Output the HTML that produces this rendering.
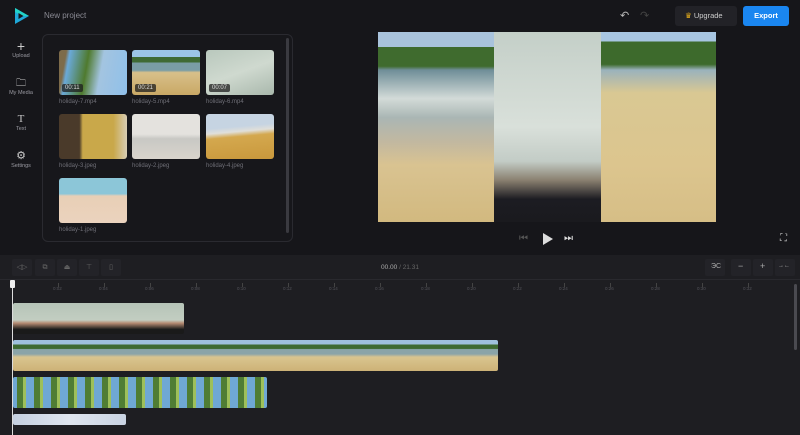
<!DOCTYPE html>
<html><head><meta charset="utf-8"><style>
*{margin:0;padding:0;box-sizing:border-box}
body{width:800px;height:435px;overflow:hidden;background:#16161a;font-family:"Liberation Sans",sans-serif;color:#8a8a93;position:relative}
.a{position:absolute}
.lbl{font-size:6px;color:#6e6e76;position:absolute}
.side{position:absolute;left:4px;width:34px;text-align:center;font-size:5.5px;color:#9a9aa2}
.th{position:absolute;width:68px;height:45px;border-radius:3px;overflow:hidden}
.dur{position:absolute;left:3px;bottom:3px;background:rgba(30,30,30,.75);color:#ddd;font-size:6px;padding:1px 3px;border-radius:2px}
.tb{position:absolute;top:259px;width:20px;height:17px;background:#232328;border-radius:2px;color:#666;font-size:7px;text-align:center;line-height:17px}
.tick{position:absolute;top:283px;width:1px;height:4px;background:#444}
.tl{position:absolute;top:286px;font-size:4.5px;color:#55555c}
</style></head><body>
<svg class="a" style="left:13px;top:7px" width="17" height="18" viewBox="0 0 17 18"><path d="M2 1 L16 9 L2 17 Z" fill="#1fa8d8"/><path d="M2 1 L16 9 L9 9 L2 5Z" fill="#22d3c8"/><path d="M5.5 6 L10.5 9 L5.5 12 Z" fill="#16161a"/></svg>
<div class="a" style="left:44px;top:11px;font-size:8px;color:#8a8a93">New project</div>
<div class="a" style="left:620px;top:9px;font-size:11px;color:#bbb">↶</div>
<div class="a" style="left:640px;top:9px;font-size:11px;color:#444">↷</div>
<div class="a" style="left:675px;top:6px;width:62px;height:20px;background:#222227;border-radius:3px;font-size:7.5px;color:#ccc;line-height:20px;padding-left:10px"><span style="color:#f2b61b">♛</span> Upgrade</div>
<div class="a" style="left:743px;top:6px;width:46px;height:20px;background:#1a86f0;border-radius:3px;font-size:7.5px;color:#fff;line-height:20px;text-align:center;font-weight:bold">Export</div>
<div class="side" style="top:40px"><div style="font-size:14px;line-height:13px;color:#ccc">+</div>Upload</div>
<div class="side" style="top:77px"><div style="font-size:10px;line-height:13px;color:#ccc">🗀</div>My Media</div>
<div class="side" style="top:113px"><div style="font-size:11px;line-height:13px;color:#ccc;font-family:'Liberation Serif'">T</div>Text</div>
<div class="side" style="top:150px"><div style="font-size:11px;line-height:13px;color:#ccc">⚙</div>Settings</div>
<div class="a" style="left:42px;top:34px;width:251px;height:208px;border:1px solid #2a2a30;border-radius:6px;background:#17171b"></div>
<div class="a" style="left:286px;top:38px;width:3px;height:195px;background:#3a3a40;border-radius:2px"></div>
<div class="th" style="left:59px;top:50px;background:linear-gradient(100deg,#7d6b4a 0 10%,#6aa9d8 15%,#4f7a2e 40%,#a3c4e0 60%,#8fc0ea)"><div class="dur">00:11</div></div>
<div class="th" style="left:132px;top:50px;background:linear-gradient(180deg,#9cc4e6 0 15%,#3f6a34 15% 28%,#7a9da5 28% 45%,#d8c08a 50%,#c9a865)"><div class="dur">00:21</div></div>
<div class="th" style="left:206px;top:50px;background:linear-gradient(160deg,#b9c8bd,#cfd9cf 50%,#a9b8ac)"><div class="dur">00:07</div></div>
<div class="th" style="left:59px;top:114px;background:linear-gradient(90deg,#4a3a2a 0 30%,#c9a84a 35% 80%,#d8cdb5)"></div>
<div class="th" style="left:132px;top:114px;background:linear-gradient(180deg,#e4e2de 0 45%,#c8c8c4 55%,#d9d4cc)"></div>
<div class="th" style="left:206px;top:114px;background:linear-gradient(175deg,#c6d4e2 0 30%,#e0dfd9 40%,#d4a84e 50%,#c9983c)"></div>
<div class="th" style="left:59px;top:178px;background:linear-gradient(180deg,#8cc6d8 0 35%,#e8cfb6 40%,#ebd3be)"></div>
<div class="lbl" style="left:59px;top:99px">holiday-7.mp4</div>
<div class="lbl" style="left:132px;top:99px">holiday-5.mp4</div>
<div class="lbl" style="left:206px;top:99px">holiday-6.mp4</div>
<div class="lbl" style="left:59px;top:163px">holiday-3.jpeg</div>
<div class="lbl" style="left:132px;top:163px">holiday-2.jpeg</div>
<div class="lbl" style="left:206px;top:163px">holiday-4.jpeg</div>
<div class="lbl" style="left:59px;top:227px">holiday-1.jpeg</div>
<div class="a" style="left:378px;top:32px;width:116px;height:190px;background:linear-gradient(180deg,#a9c3dc 0 8%,#3f6b2e 8% 18%,#6f8e98 20%,#d3dbd8 35%,#aab6b4 45%,#c2b8a0 58%,#d9c391 70%,#d2b97f)"></div>
<div class="a" style="left:494px;top:32px;width:107px;height:190px;background:linear-gradient(180deg,#c4cfc8,#d9e0da 50%,#c3ccc6 68%,#8a8070 78%,#1c1c22 88%,#1a1a1e)"></div>
<div class="a" style="left:601px;top:32px;width:115px;height:190px;background:linear-gradient(180deg,#a8c6e2 0 5%,#3d6a2c 5% 17%,#9ab2bc 20%,#d9c893 32%,#dcc58e 70%,#d6be86)"></div>
<div class="a" style="left:519px;top:233px;font-size:10px;color:#555">⏮</div>
<svg class="a" style="left:542px;top:233px" width="11" height="12"><path d="M1 0 L11 6 L1 12Z" fill="#ddd"/></svg>
<div class="a" style="left:564px;top:233px;font-size:10px;color:#ddd">⏭</div>
<div class="a" style="left:780px;top:233px;font-size:10px;color:#ccc">⛶</div>
<div class="a" style="left:0;top:255px;width:800px;height:180px;background:#1e1e22"></div>
<div class="a" style="left:0;top:279px;width:800px;height:1px;background:#29292e"></div>
<div class="tb" style="left:12px">◁▷</div><div class="tb" style="left:35px">⧉</div><div class="tb" style="left:57px">⏏</div><div class="tb" style="left:79px">⊤</div><div class="tb" style="left:101px">▯</div>
<div class="a" style="left:381px;top:264px;font-size:6.5px;color:#aaa">00.00 <span style="color:#666">/ 21.31</span></div>
<div class="tb" style="left:705px;width:20px"></div><div class="tb" style="left:731px;width:20px"></div><div class="tb" style="left:753px;width:20px"></div><div class="tb" style="left:775px;width:20px"></div>
<div class="a" style="left:711px;top:263px;font-size:7px;color:#aaa">ЭC</div>
<div class="a" style="left:738px;top:261px;font-size:9px;color:#aaa">−</div>
<div class="a" style="left:760px;top:261px;font-size:9px;color:#aaa">+</div>
<div class="a" style="left:778px;top:263px;font-size:6px;color:#aaa">→←</div>
<div class="tick" style="left:58px"></div><div class="tick" style="left:104px"></div><div class="tick" style="left:150px"></div><div class="tick" style="left:196px"></div><div class="tick" style="left:242px"></div><div class="tick" style="left:288px"></div><div class="tick" style="left:334px"></div><div class="tick" style="left:380px"></div><div class="tick" style="left:426px"></div><div class="tick" style="left:472px"></div><div class="tick" style="left:518px"></div><div class="tick" style="left:564px"></div><div class="tick" style="left:610px"></div><div class="tick" style="left:656px"></div><div class="tick" style="left:702px"></div><div class="tick" style="left:748px"></div>
<div class="tl" style="left:53px">0:02</div><div class="tl" style="left:99px">0:04</div><div class="tl" style="left:145px">0:06</div><div class="tl" style="left:191px">0:08</div><div class="tl" style="left:237px">0:10</div><div class="tl" style="left:283px">0:12</div><div class="tl" style="left:329px">0:14</div><div class="tl" style="left:375px">0:16</div><div class="tl" style="left:421px">0:18</div><div class="tl" style="left:467px">0:20</div><div class="tl" style="left:513px">0:22</div><div class="tl" style="left:559px">0:24</div><div class="tl" style="left:605px">0:26</div><div class="tl" style="left:651px">0:28</div><div class="tl" style="left:697px">0:30</div><div class="tl" style="left:743px">0:32</div>
<div class="a" style="left:794px;top:284px;width:3px;height:66px;background:#4a4a50;border-radius:2px"></div>
<div class="a" style="left:13px;top:303px;width:171px;height:31px;border-radius:2px;background:linear-gradient(180deg,#b6c4b8,#c2cdc1 55%,#b58a72 65%,#1a1a1a 85%)"></div>
<div class="a" style="left:13px;top:340px;width:485px;height:31px;border-radius:2px;background:linear-gradient(180deg,#9fc0dc 0 15%,#3e6a30 15% 28%,#8aa4a8 30% 45%,#d9c58f 55%,#cdb277)"></div>
<div class="a" style="left:13px;top:377px;width:254px;height:31px;border-radius:2px;background:repeating-linear-gradient(90deg,#6fa8d4 0 4px,#4f7d34 4px 10px,#9ec05a 10px 13px,#6fa8d4 13px 17px)"></div>
<div class="a" style="left:13px;top:414px;width:113px;height:11px;border-radius:2px;background:linear-gradient(90deg,#c5d0e0,#dfe5ef 50%,#c9d3e2)"></div>
<div class="a" style="left:12px;top:283px;width:1px;height:152px;background:#ddd"></div>
<div class="a" style="left:10px;top:280px;width:5px;height:8px;background:#eee;border-radius:1px"></div>
</body></html>
